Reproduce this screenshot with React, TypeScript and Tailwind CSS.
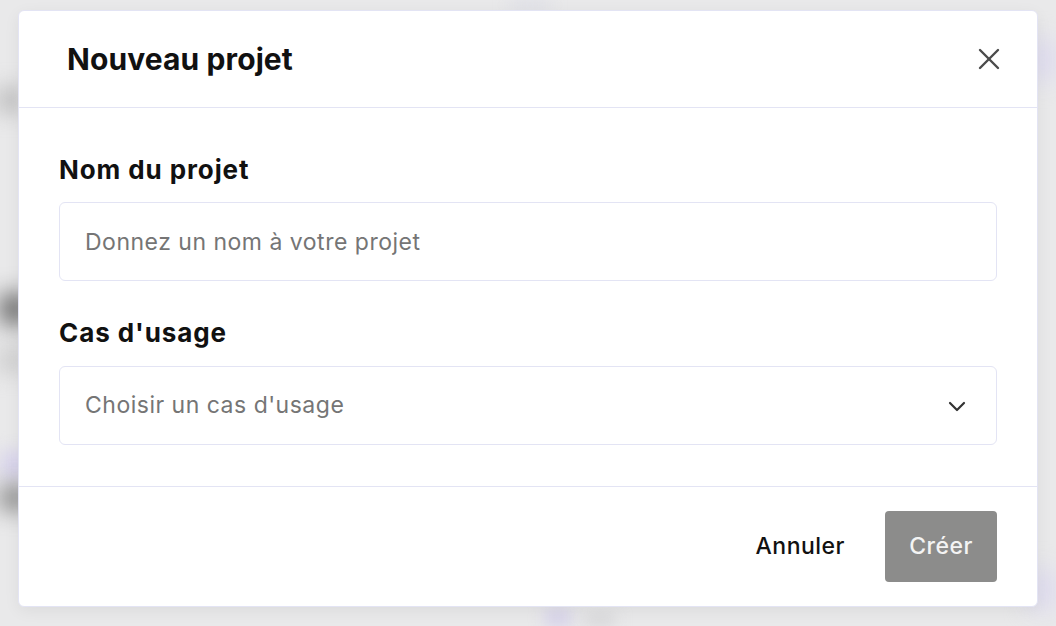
import { useState } from "react";

const font = { fontFamily: "Inter, 'Noto Sans', sans-serif" };

function CloseIcon() {
  return (
    <svg width="22" height="22" viewBox="0 0 22 22" fill="none" stroke="#4b4b4b" strokeWidth="2.4" strokeLinecap="round">
      <path d="M2 2 20 20" />
      <path d="M20 2 2 20" />
    </svg>
  );
}

function Chevron() {
  return (
    <svg width="18" height="12" viewBox="0 0 18 12" fill="none" stroke="#333" strokeWidth="2.2" strokeLinecap="round" strokeLinejoin="round">
      <path d="M2 3l7 7 7-7" />
    </svg>
  );
}

export default function App() {
  const [name, setName] = useState("");

  return (
    <div className="relative h-[626px] w-[1056px] overflow-hidden bg-[#e9e9ea]" style={font}>
      {/* blurred page behind the modal */}
      <div className="absolute left-0 top-[295px] h-[28px] w-[30px] rounded bg-[#555] blur-md" />
      <div className="absolute left-0 top-[350px] h-[20px] w-[24px] rounded bg-[#bbb] blur-md" />
      <div className="absolute left-0 top-[450px] h-[30px] w-[30px] bg-[#d9d5ec] blur-sm" />
      <div className="absolute left-0 top-[488px] h-[20px] w-[30px] rounded bg-[#666] blur-md" />
      <div className="absolute left-0 top-[90px] h-[20px] w-[20px] rounded bg-[#999] blur-md" />
      <div className="absolute right-0 top-[40px] h-[40px] w-[26px] bg-[#dcd9ef] blur-md" />
      <div className="absolute right-0 top-[570px] h-[40px] w-[26px] bg-[#dcd9ef] blur-md" />
      <div className="absolute left-[510px] top-0 h-[10px] w-[40px] bg-[#dcdde6] blur-sm" />
      <div className="absolute left-[545px] top-[608px] h-[20px] w-[26px] bg-[#d6d2ea] blur-sm" />
      <div className="absolute left-[585px] top-[615px] h-[10px] w-[30px] bg-[#cfcfd2] blur-sm" />

      <div className="relative pl-[18px] pt-[10px]">
        <div className="w-[1020px] rounded-md border border-[#e3e4f4] bg-white shadow-[0_4px_16px_rgba(0,0,0,0.06)]">
          <div className="flex h-[97px] items-center justify-between border-b border-[#e3e4f4] pl-[48px] pr-[37px]">
            <h2 className="text-[30px] font-bold tracking-[0.1px] text-[#111]">Nouveau projet</h2>
            <button className="flex h-[22px] w-[22px] items-center justify-center">
              <CloseIcon />
            </button>
          </div>

          <div className="border-b border-[#e3e4f4] px-[40px] pb-[41px] pt-[46px]">
            <label className="block text-[26px] font-bold leading-[32px] tracking-[0.9px] text-[#111]">Nom du projet</label>
            <input
              value={name}
              onChange={(e) => setName(e.target.value)}
              placeholder="Donnez un nom à votre projet"
              className="mt-[16px] block h-[79px] w-full rounded-md border border-[#e3e4f4] px-[25px] text-[23px] tracking-[0.5px] text-[#111] outline-none placeholder:text-[#757575]"
            />

            <label className="mt-[36px] block text-[26px] font-bold leading-[32px] tracking-[0.9px] text-[#111]">Cas d'usage</label>
            <div className="mt-[17px] flex h-[79px] w-full items-center justify-between rounded-md border border-[#e3e4f4] pl-[25px] pr-[30px]">
              <span className="text-[23px] tracking-[0.5px] text-[#757575]">Choisir un cas d'usage</span>
              <Chevron />
            </div>
          </div>

          <div className="flex items-center justify-end gap-[40px] px-[40px] pb-[24px] pt-[24px]">
            <button className="text-[23px] font-medium tracking-[0.5px] text-[#111]">Annuler</button>
            <button className="h-[71px] w-[112px] rounded-[4px] bg-[#8c8c8b] text-[23px] font-medium tracking-[0.5px] text-[#f4f4f4]">Créer</button>
          </div>
        </div>
      </div>
    </div>
  );
}
